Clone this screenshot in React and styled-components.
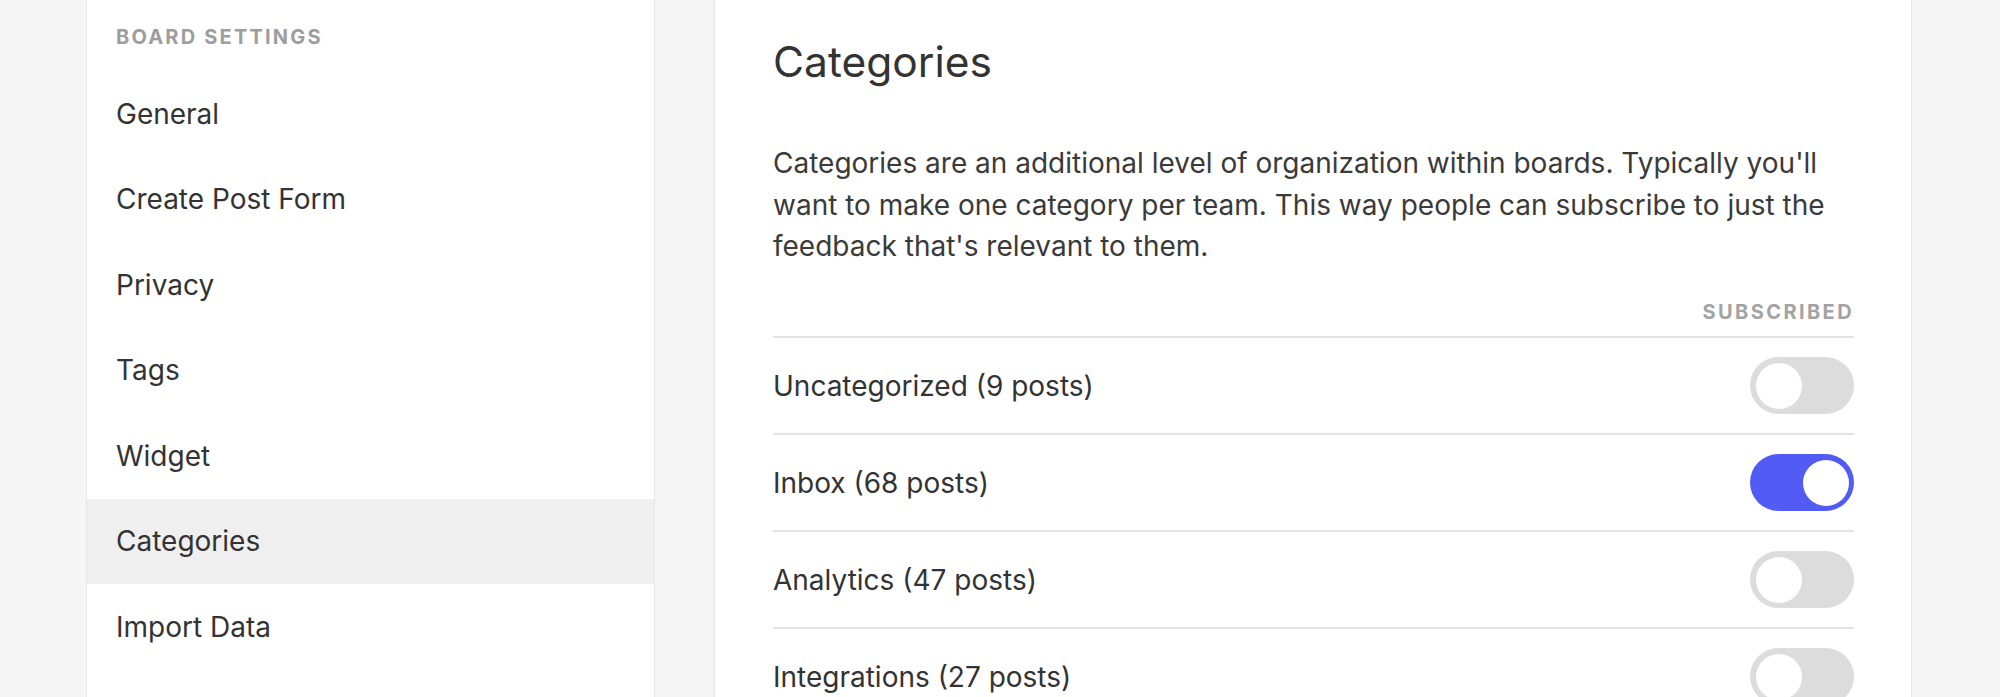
import React, { useState } from 'react'
import styled, { createGlobalStyle } from 'styled-components'

const GlobalStyle = createGlobalStyle`
  html, body {
    margin: 0;
    padding: 0;
    background: #f5f5f5;
    overflow: hidden;
  }
  body {
    font-family: Inter, "Liberation Sans", sans-serif;
    color: #333;
    -webkit-font-smoothing: antialiased;
  }
`;

const Page = styled.div`
  display: flex;
  align-items: stretch;
  gap: 59px;
  padding-left: 86px;
  min-height: 100vh;
`;

const Sidebar = styled.nav`
  width: 569px;
  box-sizing: border-box;
  background: #fff;
  border-left: 1px solid #e6e6e6;
  border-right: 1px solid #e6e6e6;
`;

const SectionLabel = styled.div`
  box-sizing: border-box;
  height: 71px;
  padding: 27px 29px 0;
  line-height: 20px;
  font-size: 20px;
  font-weight: 700;
  letter-spacing: 2.2px;
  text-transform: uppercase;
  color: #9d9d9d;
`;

const NavItem = styled.div`
  display: flex;
  align-items: center;
  height: 85.5px;
  padding: 0 29px;
  font-size: 28px;
  color: #333;
  background: ${p => (p.$active ? '#efefef' : 'transparent')};
  cursor: pointer;
`;

const Main = styled.main`
  width: 1198px;
  box-sizing: border-box;
  background: #fff;
  border-left: 1px solid #e6e6e6;
  border-right: 1px solid #e6e6e6;
  padding: 32px 57px 0 58px;
`;

const Title = styled.h1`
  margin: 0;
  font-size: 42.5px;
  line-height: 60px;
  font-weight: 400;
  color: #333;
`;

const Description = styled.p`
  margin: 51px 0 0;
  font-size: 28px;
  line-height: 41.5px;
  color: #3a3a3a;
`;

const TableHead = styled.div`
  margin-top: 34px;
  padding-bottom: 14.5px;
  border-bottom: 2px solid #e3e3e3;
  text-align: right;
  font-size: 20px;
  line-height: 20px;
  font-weight: 700;
  letter-spacing: 2.4px;
  color: #a3a3a3;
`;

const Row = styled.div`
  display: flex;
  align-items: center;
  justify-content: space-between;
  height: 95px;
  border-bottom: 2px solid #e3e3e3;
  font-size: 28px;
  color: #333;
`;

const Track = styled.button`
  position: relative;
  width: 104px;
  height: 57px;
  padding: 0;
  border: 0;
  border-radius: 28.5px;
  background: ${p => (p.$on ? '#525cf5' : '#dcdcdc')};
  cursor: pointer;
  flex-shrink: 0;
`;

const Knob = styled.span`
  position: absolute;
  top: 5.5px;
  left: ${p => (p.$on ? '52.5px' : '5.5px')};
  width: 46px;
  height: 46px;
  border-radius: 50%;
  background: #fff;
  transition: left 0.2s;
`;

function Toggle({ on, onClick }) {
  return (
    <Track $on={on} onClick={onClick}>
      <Knob $on={on} />
    </Track>
  )
}

const navItems = ['General', 'Create Post Form', 'Privacy', 'Tags', 'Widget', 'Categories', 'Import Data', 'Delete Board'];

const initialCategories = [
  { name: 'Uncategorized', posts: 9, on: false },
  { name: 'Inbox', posts: 68, on: true },
  { name: 'Analytics', posts: 47, on: false },
  { name: 'Integrations', posts: 27, on: false },
  { name: 'Mobile', posts: 12, on: false },
];

export default function App() {
  const [categories, setCategories] = useState(initialCategories);

  const flip = i => {
    setCategories(cs => cs.map((c, j) => (j === i ? { ...c, on: !c.on } : c)));
  };

  return (
    <>
      <GlobalStyle />
      <Page>
        <Sidebar>
          <SectionLabel>Board Settings</SectionLabel>
          {navItems.map(item => (
            <NavItem key={item} $active={item === 'Categories'}>{item}</NavItem>
          ))}
        </Sidebar>
        <Main>
          <Title>Categories</Title>
          <Description>
            Categories are an additional level of organization within boards. Typically you'll<br />
            want to make one category per team. This way people can subscribe to just the<br />
            feedback that's relevant to them.
          </Description>
          <TableHead>SUBSCRIBED</TableHead>
          {categories.map((c, i) => (
            <Row key={c.name}>
              <span>{c.name} ({c.posts} posts)</span>
              <Toggle on={c.on} onClick={() => flip(i)} />
            </Row>
          ))}
        </Main>
      </Page>
    </>
  )
}
